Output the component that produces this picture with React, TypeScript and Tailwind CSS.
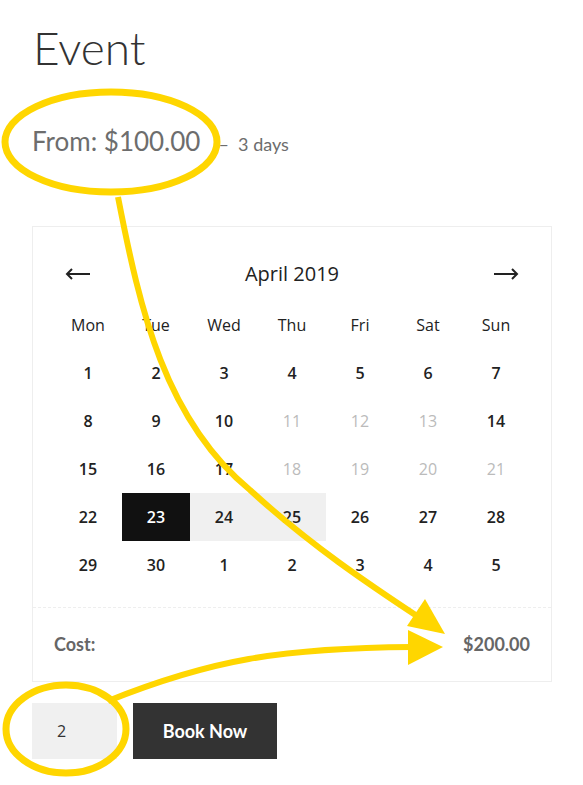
import React from "react";

type Day = { n: number; state?: "muted" | "selected" | "range" };

const weekDays = ["Mon", "Tue", "Wed", "Thu", "Fri", "Sat", "Sun"];

const days: Day[] = [
  { n: 1 }, { n: 2 }, { n: 3 }, { n: 4 }, { n: 5 }, { n: 6 }, { n: 7 },
  { n: 8 }, { n: 9 }, { n: 10 }, { n: 11, state: "muted" }, { n: 12, state: "muted" }, { n: 13, state: "muted" }, { n: 14 },
  { n: 15 }, { n: 16 }, { n: 17 }, { n: 18, state: "muted" }, { n: 19, state: "muted" }, { n: 20, state: "muted" }, { n: 21, state: "muted" },
  { n: 22 }, { n: 23, state: "selected" }, { n: 24, state: "range" }, { n: 25, state: "range" }, { n: 26 }, { n: 27 }, { n: 28 },
  { n: 29 }, { n: 30 }, { n: 1 }, { n: 2 }, { n: 3 }, { n: 4 }, { n: 5 },
];

function DayCell({ day }: { day: Day }) {
  let cls = "text-[#222] font-semibold";
  if (day.state === "muted") cls = "text-[#bbb] font-normal";
  if (day.state === "selected") cls = "bg-[#111] text-white font-semibold";
  if (day.state === "range") cls = "bg-[#f0f0f0] text-[#222] font-semibold";
  return <div className={`h-[48px] flex items-center justify-center text-[16px] ${cls}`}>{day.n}</div>;
}

function Annotations() {
  const y = "#ffd600";
  return (
    <svg className="absolute inset-0 pointer-events-none" width="583" height="785" viewBox="0 0 583 785">
      <ellipse cx="111" cy="142" rx="106" ry="50" fill="none" stroke={y} strokeWidth="7" />
      <path d="M118,197 C140,310 165,420 250,490 C310,545 370,585 420,618" fill="none" stroke={y} strokeWidth="6" />
      <polygon points="425,599 445,634 407,626" fill={y} />
      <ellipse cx="66" cy="729" rx="60" ry="44" fill="none" stroke={y} strokeWidth="7" />
      <path d="M108,701 C210,660 280,648 412,647" fill="none" stroke={y} strokeWidth="6" />
      <polygon points="408,630 443,647 408,665" fill={y} />
    </svg>
  );
}

export default function App() {
  return (
    <div className="relative w-[583px] h-[785px] bg-white overflow-hidden">
      <div className="pl-[32px] pt-[20px]">
        <h1 className="text-[46px] leading-[56px] font-light text-[#333] font-['Lato',sans-serif] pl-[1px]">
          Event
        </h1>
        <p className="mt-[46px] h-[40px] flex items-baseline font-['Lato',sans-serif] text-[#6d6d6d]">
          <span className="text-[26px]">From: $100.00</span>
          <span className="text-[18px] ml-[18px]">–&nbsp;&nbsp;3 days</span>
        </p>

        <div className="mt-[64px] w-[520px] border border-[#eee] font-['Open_Sans','Noto_Sans',sans-serif]">
          <div className="pt-[23px] px-[21px]">
            <div className="h-[48px] flex items-center justify-between text-[#222] px-[11px]">
              <svg width="26" height="12" viewBox="0 0 26 12">
                <path d="M25,6 H2 M7,1 L2,6 L7,11" fill="none" stroke="#222" strokeWidth="2" />
              </svg>
              <span className="text-[20px]">April 2019</span>
              <svg width="26" height="12" viewBox="0 0 26 12">
                <path d="M1,6 H24 M19,1 L24,6 L19,11" fill="none" stroke="#222" strokeWidth="2" />
              </svg>
            </div>
            <div className="grid grid-cols-7 mt-[3px]">
              {weekDays.map((d) => (
                <div key={d} className="h-[48px] flex items-center justify-center text-[16px] text-[#222]">
                  {d}
                </div>
              ))}
              {days.map((d, i) => (
                <DayCell key={i} day={d} />
              ))}
            </div>
          </div>
          <div className="mt-[18px] border-t border-dashed border-[#eee] h-[74px] px-[21px] flex items-center justify-between font-['Lato',sans-serif] font-bold text-[18px] text-[#666]">
            <span>Cost:</span>
            <span>$200.00</span>
          </div>
        </div>

        <div className="mt-[21px] flex gap-[16px]">
          <div className="w-[85px] h-[56px] bg-[#f0f0f0] flex items-center pl-[25px] text-[16px] text-[#333] font-['Open_Sans',sans-serif]">
            2
          </div>
          <button className="w-[144px] h-[56px] bg-[#333] text-white font-bold text-[18px] font-['Lato',sans-serif]">
            Book Now
          </button>
        </div>
      </div>
      <Annotations />
    </div>
  );
}
